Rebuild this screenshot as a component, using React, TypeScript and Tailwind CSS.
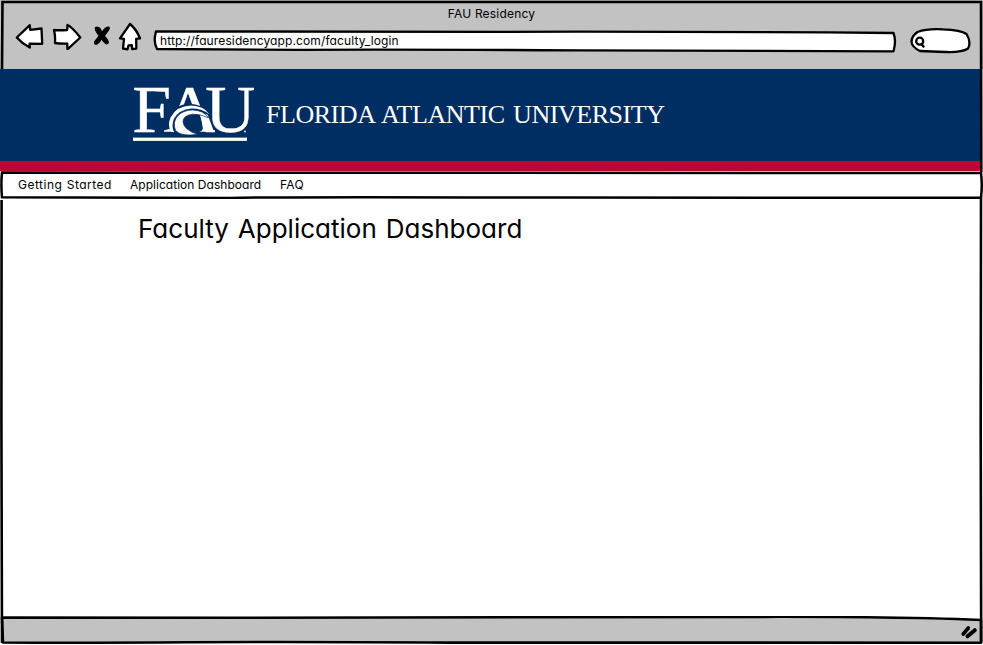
import React from "react";

const sketchFont = "font-['Inter','Noto_Sans',sans-serif] [font-feature-settings:'cv11']";

function BackIcon() {
  return (
    <svg className="h-[27px] w-[29px] shrink-0" viewBox="15 23 29 27" fill="white" stroke="black" strokeWidth="2.3" strokeLinejoin="round">
      <path d="M16.8 37.5 L29.8 25.2 L30.2 29.8 L41.5 28.5 L42.2 43.8 L29.6 43.6 L29.8 47.6 Q22 43.5 16.8 37.5 Z" />
    </svg>
  );
}

function ForwardIcon() {
  return (
    <svg className="h-[27px] w-[30px] shrink-0" viewBox="52 23 30 27" fill="white" stroke="black" strokeWidth="2.3" strokeLinejoin="round">
      <path d="M54 30 Q58 30.5 67.2 30 L67.5 25 Q72 27 80.3 37.5 L67.5 49.3 L67.2 43.6 Q60 43.8 55 43 Q55.5 36 54 30 Z" />
    </svg>
  );
}

function StopIcon() {
  return (
    <svg className="h-[22px] w-[18px] shrink-0" viewBox="93 25 18 22" fill="black" stroke="black" strokeLinejoin="round">
      <path d="M95.5 27.5 Q97.5 26.2 100 28.5 L102 32.5 Q105 27 108.5 27 Q110.2 28 108 31 L104.2 36 Q109 41 108.2 43 Q106.5 45.2 104.2 42 L101.5 38.8 Q98.5 44.5 95.5 44.3 Q93.5 43 95.5 40.5 L99.2 35.8 Q94.5 30 95.5 27.5 Z" strokeWidth="1.2" />
    </svg>
  );
}

function HomeIcon() {
  return (
    <svg className="h-[29px] w-[24px] shrink-0" viewBox="118 22 24 29" fill="white" stroke="black" strokeWidth="2.3" strokeLinejoin="round">
      <path d="M130 24 L120 38.4 L124 38.8 L123 48.5 L127.5 49.3 L128.5 45.5 L131.8 45.2 L132.2 49.2 L136.3 48.6 L136.2 38.8 L140 38.3 Q136.5 29.5 130 24 Z" />
    </svg>
  );
}

function BrowserBar() {
  return (
    <header className="relative h-[69px] bg-[#c2c2c2]">
      <div className={`absolute left-0 top-[6px] w-full text-center text-[12px] leading-4 tracking-[0.2px] ${sketchFont}`}>
        FAU Residency
      </div>
      <div className="flex items-start pl-[15px] pt-[22px]">
        <div className="mt-px"><BackIcon /></div>
        <div className="ml-2 mt-px"><ForwardIcon /></div>
        <div className="ml-[11px] mt-[3px]"><StopIcon /></div>
        <div className="ml-[7px]"><HomeIcon /></div>
        <div className="relative ml-[10px] mt-[7px] flex h-[25px] w-[745px] items-center pl-2">
          <svg className="absolute inset-0 h-full w-full" viewBox="152 29 745 25" fill="white" stroke="black" strokeWidth="2.3" strokeLinejoin="round">
            <path d="M156 31.4 Q300 32.2 500 31.8 T893.5 33 Q896.5 41 893.5 51.3 Q750 51.5 580 50.4 T300 49.8 L157 49 Q153 42 156 31.4 Z" />
          </svg>
          <span className={`relative -top-px whitespace-nowrap text-[12px] leading-4 tracking-[0.12px] ${sketchFont}`}>
            http://fauresidencyapp.com/faculty_login
          </span>
        </div>
        <svg className="ml-[12px] mt-[5px] h-[28px] w-[63px] shrink-0" viewBox="909 27 63 28" fill="white" stroke="black" strokeWidth="2.3" strokeLinecap="round">
          <path d="M917.5 32 Q927 28.5 943 29.4 Q961 30 966.5 34 Q971.5 42 968 48.5 Q962 52.5 946 52 Q931 51.5 920 51 Q912 47 911.5 42 Q911.5 36 917.5 32 Z" />
          <circle cx="919.7" cy="41.2" r="3.5" strokeWidth="2.3" />
          <path d="M921.8 44.4 L923.5 46.6" strokeWidth="2.4" />
        </svg>
      </div>
    </header>
  );
}

function FauLogo() {
  return (
    <svg className="h-[92px] w-[122px] shrink-0" viewBox="132 69 122 92" fill="white">
      <text
        className="font-['Liberation_Serif',serif]"
        fontSize="67"
        stroke="white"
        strokeWidth="0.4"
        transform="scale(1.04 1)"
        x="127.2 158.7 197.4"
        y="132"
      >
        FAU
      </text>
      <path d="M162 134 L167.5 116 Q176 103.5 190 104 Q198 104 206 108.5 L211 114 L200 115.5 L206 133.5 Z" fill="#002d62" />
      <path d="M200.5 114.5 L207.5 114.5 Q210.5 122 214 131.8 L199 131.8 Q203 131 202.8 128 Z" />
      <path d="M164 131.8 L164 130.6 L169 129 L174.5 131.8 Z" />
      <path d="M171 131.5 Q167.2 126 170.5 117.5 Q176.5 106 191 105.6 Q203.5 106 209.5 114.2 Q202 108.4 191.5 108.5 Q179 109.5 173.8 119 Q171.2 125.5 174 132.2 Z" />
      <path d="M175.5 130.5 Q172.2 122 178 115.5 Q184 109.8 193 110 Q204 110.5 208.5 117.8 Q200 113.8 192.5 114.2 Q182.8 115.4 183 122 Q184 130 197.5 134.2 Q181.5 137 175.5 130.5 Z" stroke="#002d62" strokeWidth="0.7" />
      <rect x="133" y="137.6" width="114" height="3.3" />
      <circle cx="245" cy="131.5" r="0.9" />
    </svg>
  );
}

function NavBar() {
  return (
    <nav className="relative flex h-[28px] items-center bg-white pl-[18px]">
      <svg className="absolute inset-0 h-full w-full" viewBox="0 171 983 28" fill="none" stroke="black" strokeWidth="2.5">
        <path d="M2 172.5 Q180 171.8 420 172.8 T981 173 Q982.5 185 981 197.7 Q850 198.5 560 197.6 T230 198 L2 197.3 Q.8 184 2 172.5 Z" />
      </svg>
      <div className={`relative flex text-[12px] leading-4 whitespace-nowrap ${sketchFont}`}>
        <a className="w-[112px] tracking-[0.5px] [word-spacing:0.5px]">Getting Started</a>
        <a className="w-[150px] tracking-[0.03px]">Application Dashboard</a>
        <a className="tracking-[0.3px]">FAQ</a>
      </div>
    </nav>
  );
}

function StatusBar() {
  return (
    <footer className="relative h-[29px]">
      <svg className="h-full w-full" viewBox="0 616 983 29" fill="none" stroke="black">
        <path d="M2 617.5 L230 617.8 Q560 617 780 616.8 Q910 617 981 620 L981 642.7 Q750 643.5 450 642.6 Q300 641.6 190 642.2 Q80 643 3 642.5 Z" fill="#c2c2c2" strokeWidth="2.6" strokeLinejoin="round" />
        <path d="M963.3 634 L968.3 628" strokeWidth="3.6" strokeLinecap="round" />
        <path d="M967.5 636.3 L974.8 630.2" strokeWidth="4" strokeLinecap="round" />
      </svg>
    </footer>
  );
}

export default function App() {
  return (
    <div className="relative flex h-[645px] w-[983px] flex-col overflow-hidden bg-white text-black">
      <BrowserBar />
      <section className="flex h-[92px] w-[980px] items-start bg-[#002d62] pl-[132px]">
        <FauLogo />
        <div className="ml-[12px] mt-[30px] whitespace-nowrap font-['Liberation_Serif',serif] text-[26px] leading-8 tracking-[-0.46px] [word-spacing:2.5px] text-white">
          FLORIDA ATLANTIC UNIVERSITY
        </div>
      </section>
      <div className="h-[10px] w-[980px] bg-[#c10435]" />
      <NavBar />
      <main className="flex-1 pl-[138px] pt-[14px]">
        <h1 className={`whitespace-nowrap text-[26px] leading-8 tracking-[0.02px] [word-spacing:1.5px] ${sketchFont}`}>Faculty Application Dashboard</h1>
      </main>
      <StatusBar />
      <svg className="pointer-events-none absolute inset-0 h-full w-full" viewBox="0 0 983 645" fill="none" stroke="black" strokeWidth="2.6">
        <path d="M2 69 L2.5 2 L981 2 L981.3 172 M1.6 200 L1.4 420 L2 643 M981 198 L980.7 430 L981.2 643" />
      </svg>
    </div>
  );
}
